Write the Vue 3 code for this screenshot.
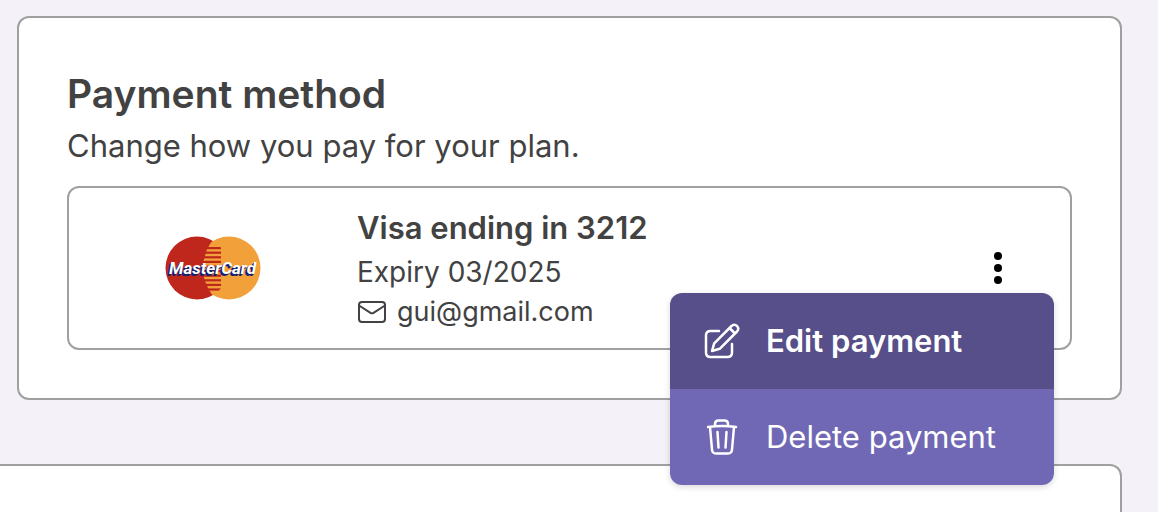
<script setup>
const card = { title: 'Visa ending in 3212', expiry: 'Expiry 03/2025', email: 'gui@gmail.com' }
const stripes = [0, 1, 2, 3, 4, 5, 6, 7, 8, 9]
</script>

<template>
  <main class="page">
    <section class="panel">
      <h1>Payment method</h1>
      <p class="lead">Change how you pay for your plan.</p>
      <article class="method">
        <div class="brand">
          <svg width="96" height="64" viewBox="0 0 96 64" role="img" aria-label="MasterCard">
            <defs>
              <clipPath id="overlap"><circle cx="32" cy="32" r="31.500" /></clipPath>
            </defs>
            <circle cx="32" cy="32" r="31.500" fill="#bf271d" />
            <circle cx="64" cy="32" r="31.500" fill="#f2a039" />
            <g clip-path="url(#overlap)" fill="#bf271d">
              <rect v-for="n in stripes" :key="n" x="38" :y="11 + n * 4.600" width="18" height="2.200" />
              <path d="M47 5L42 13L40 20L38 27V38L40 45L43 52L47 59L38 63H30V1Z" />
            </g>
            <g class="wordmark">
              <text x="2" y="40" fill="#17206f">MasterCard</text>
              <text x="3" y="39" fill="#17206f">MasterCard</text>
              <text x="4" y="38" fill="#ffffff">MasterCard</text>
            </g>
          </svg>
        </div>
        <div class="details">
          <h2>{{ card.title }}</h2>
          <p>{{ card.expiry }}</p>
          <p class="email">
            <svg width="30" height="24" viewBox="0 0 30 24" aria-hidden="true">
              <rect x="2" y="2" width="26" height="20" rx="3" />
              <path d="M2 5.500L13.500 12.800Q15 13.700 16.500 12.800L28 5.500" />
            </svg>
            <span>{{ card.email }}</span>
          </p>
        </div>
        <div class="actions">
          <button class="more" type="button" aria-label="More actions" aria-expanded="true">
            <svg width="8" height="32" viewBox="0 0 8 32">
              <circle cx="4" cy="4" r="4" /><circle cx="4" cy="16" r="4" /><circle cx="4" cy="28" r="4" />
            </svg>
          </button>
          <div class="menu" role="menu">
            <button class="item active" type="button" role="menuitem">
              <svg width="36" height="36" viewBox="0 0 36 36" aria-hidden="true">
                <path d="M15 8H6.500Q2 8 2 12.500V29.500Q2 34 6.500 34H23.500Q28 34 28 29.500V21" />
                <path d="M8 28L10.200 20.300L27.500 3Q30.300 .4 33 3Q35.600 5.700 33 8.500L15.700 25.800L8 28ZM25.500 5L31 10.500" />
              </svg>
              <span>Edit payment</span>
            </button>
            <button class="item" type="button" role="menuitem">
              <svg width="36" height="36" viewBox="0 0 36 36" aria-hidden="true">
                <path d="M4 8Q18 6 32 8M11 7V5Q11 1.500 14.500 1.500H20.500Q24 1.500 24 5V7M6 8L8 30.500Q8.300 34.500 12 34.500H24Q27.700 34.500 28 30.500L30 8M13.500 13L14.500 28.500M22.500 13L21.500 28.500" />
              </svg>
              <span>Delete payment</span>
            </button>
          </div>
        </div>
      </article>
    </section>
    <section class="panel next" aria-label="More settings"></section>
  </main>
</template>

<style>
body {
  margin: 0;
  background: #f4f1f9;
}
</style>

<style scoped>
.page {
  box-sizing: border-box;
  min-height: 100vh;
  display: flex;
  flex-direction: column;
  gap: 64px;
  padding: 16px 36px 0 17px;
  overflow: hidden;
  color: #424242;
  font-family: Inter, "Liberation Sans", sans-serif;
}
.panel {
  border: 2px solid #a0a0a0;
  border-radius: 12px;
  background: #fff;
  padding: 48px;
}
.next {
  flex: 1;
  padding: 0;
  margin-left: -36px;
  border-bottom: 0;
  border-radius: 12px 12px 0 0;
}
h1, h2, p {
  margin: 0;
}
h1 {
  font-size: 39px;
  line-height: 56px;
  font-weight: 600;
}
.lead {
  font-size: 31px;
  line-height: 48px;
  margin-bottom: 16px;
}
.method {
  display: flex;
  align-items: center;
  border: 2px solid #a0a0a0;
  border-radius: 12px;
  padding: 16px 68px 16px 0;
}
.brand {
  flex: 0 0 288px;
  display: flex;
  justify-content: center;
}
.wordmark {
  font: italic bold 17px Roboto, "Liberation Sans", sans-serif;
}
.details {
  flex: 1;
  font-size: 28px;
  line-height: 40px;
}
h2 {
  font-size: 31px;
  line-height: 48px;
  font-weight: 600;
}
.email {
  display: flex;
  align-items: center;
  gap: 10px;
  font-size: 27px;
}
svg {
  display: block;
  flex: none;
}
.email svg, .item svg {
  fill: none;
  stroke: currentColor;
  stroke-width: 2;
  stroke-linecap: round;
  stroke-linejoin: round;
}
.actions {
  position: relative;
}
button {
  font: inherit;
  border: 0;
  margin: 0;
  cursor: pointer;
}
.more {
  display: block;
  padding: 0;
  background: none;
}
.menu {
  position: absolute;
  z-index: 1;
  top: 41px;
  right: -52px;
  width: 384px;
  border-radius: 12px;
  overflow: hidden;
  box-shadow: 0 2px 6px rgba(0, 0, 0, 0.15);
}
.item {
  display: flex;
  align-items: center;
  gap: 26px;
  width: 100%;
  height: 96px;
  padding: 0 34px;
  background: #7168b5;
  color: #fff;
  font-size: 31px;
  line-height: 48px;
  white-space: nowrap;
}
.item.active {
  background: #564f8a;
  font-weight: 600;
}
.item svg {
  stroke-width: 2.5;
}
</style>
